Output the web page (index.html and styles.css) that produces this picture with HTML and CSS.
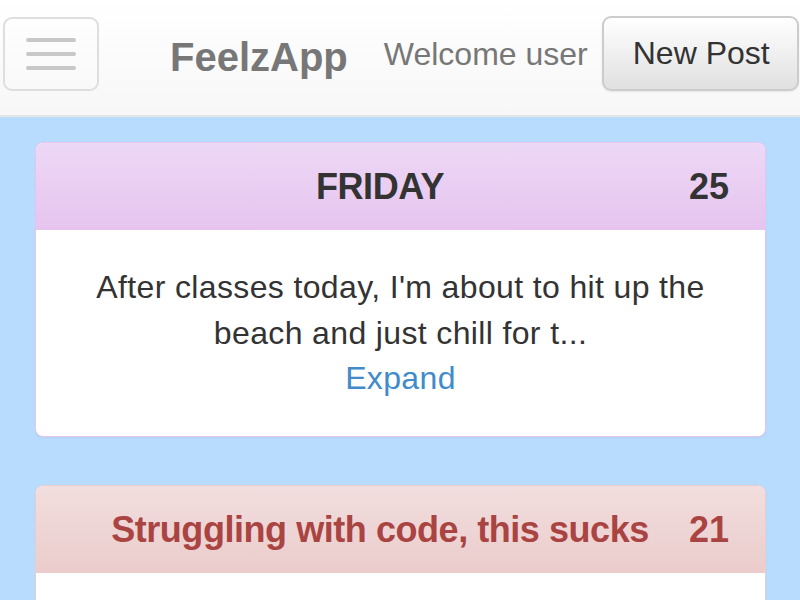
FILE: index.html
```html
<!DOCTYPE html>
<html>
<head>
<meta charset="utf-8">
<title>FeelzApp</title>
<link rel="stylesheet" href="styles.css">
</head>
<body>
<header class="navbar">
  <button class="toggle" aria-label="Menu">
    <span class="bar"></span>
    <span class="bar"></span>
    <span class="bar"></span>
  </button>
  <span class="brand">FeelzApp</span>
  <span class="welcome">Welcome user</span>
  <button class="btn-new">New Post</button>
</header>
<main class="feed">
  <section class="panel panel-purple">
    <div class="panel-heading">
      <h3 class="title">FRIDAY</h3>
      <span class="num">25</span>
    </div>
    <div class="panel-body">
      <p>After classes today, I'm about to hit up the beach and just chill for t...<br><a href="#" class="expand">Expand</a></p>
    </div>
  </section>
  <section class="panel panel-red">
    <div class="panel-heading">
      <h3 class="title">Struggling with code, this sucks</h3>
      <span class="num">21</span>
    </div>
    <div class="panel-body panel-body-empty"></div>
  </section>
</main>
</body>
</html>
```

FILE: styles.css
```css
* { box-sizing: border-box; }
html, body { margin: 0; padding: 0; }
body {
  background: #b8dcfe;
  font-family: "Liberation Sans", Arial, Helvetica, sans-serif;
  color: #333;
  overflow: hidden;
  height: 600px;
}
.navbar {
  height: 117px;
  display: flex;
  align-items: center;
  padding: 0 1px 8px 3px;
  background: linear-gradient(#ffffff, #f7f7f7);
  border-bottom: 2px solid #e4e4e4;
}
.toggle {
  width: 96px;
  height: 74px;
  border: 2px solid #dedede;
  border-radius: 9px;
  background: transparent;
  display: flex;
  flex-direction: column;
  align-items: center;
  justify-content: center;
  gap: 10px;
  padding: 0;
}
.bar {
  display: block;
  width: 50px;
  height: 4px;
  border-radius: 2px;
  background: #c8c8c8;
}
.brand {
  margin-left: 71px;
  padding-top: 6px;
  font-size: 40px;
  line-height: 40px;
  font-weight: bold;
  color: #777;
}
.welcome {
  margin-left: 36px;
  font-size: 32px;
  line-height: 32px;
  color: #777;
}
.btn-new {
  margin-left: 14px;
  height: 75px;
  padding: 0 27px 0 29px;
  font-family: inherit;
  font-size: 32px;
  color: #333;
  background: linear-gradient(#ffffff, #e0e0e0);
  border: 2px solid #cccccc;
  border-radius: 9px;
  box-shadow: 0 1px 2px rgba(0,0,0,0.08);
}
.feed {
  padding: 25px 34px 0 35px;
}
.panel {
  background: #fff;
  border: 1px solid;
  border-radius: 8px;
  margin-bottom: 48px;
  overflow: hidden;
  box-shadow: 0 1px 2px rgba(0,0,0,0.05);
}
.panel-purple { border-color: #e8c4f0; }
.panel-red { border-color: #ebccd1; }
.panel-heading {
  height: 87px;
  display: flex;
  align-items: center;
  padding: 0 36px 0 55px;
}
.panel-purple .panel-heading {
  background: linear-gradient(#edd8f6, #e6c4ef);
}
.panel-red .panel-heading {
  background: linear-gradient(#f2dede, #ebcccc);
  color: #a94442;
}
.title {
  flex: 1;
  margin: 0;
  text-align: center;
  font-size: 36px;
  font-weight: bold;
  line-height: 40px;
  letter-spacing: -0.45px;
}
.num {
  width: 60px;
  text-align: right;
  font-size: 36px;
  font-weight: bold;
  line-height: 40px;
}
.panel-body {
  padding: 35px 30px 34px;
  text-align: center;
}
.panel-body-empty {
  height: 120px;
}
.panel-body p {
  margin: 0;
  font-size: 32px;
  line-height: 45.7px;
  letter-spacing: 0.36px;
}
.expand {
  color: #428bca;
  text-decoration: none;
}
```
